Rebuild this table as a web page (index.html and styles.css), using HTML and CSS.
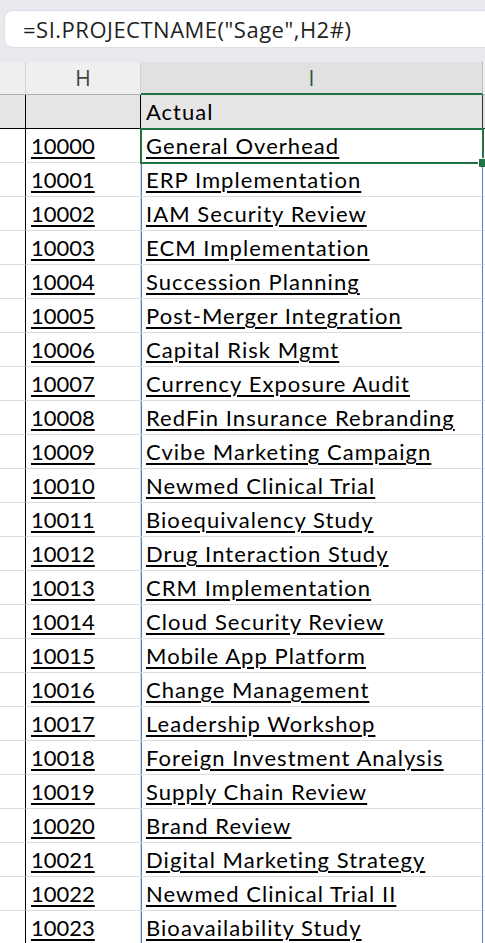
FILE: index.html
```html
<!DOCTYPE html>
<html>
<head>
<meta charset="utf-8">
<link rel="stylesheet" href="styles.css">
</head>
<body>
<div class="formula-area">
  <div class="formula-box"><span class="formula-text">=SI.PROJECTNAME("Sage",H2#)</span></div>
</div>
<div class="sheet">
  <div class="row head">
    <div class="c g"></div><div class="c h">H</div><div class="c i">I</div><div class="c j"></div>
  </div>
  <div class="row title">
    <div class="c g"></div><div class="c h"></div><div class="c i">Actual</div><div class="c j"></div>
  </div>
  <div class="row data first"><div class="c g"></div><div class="c h"><span class="link">10000</span></div><div class="c i active"><span class="link">General Overhead</span></div><div class="c j"></div></div>
  <div class="row data"><div class="c g"></div><div class="c h"><span class="link">10001</span></div><div class="c i"><span class="link">ERP Implementation</span></div><div class="c j"></div></div>
  <div class="row data"><div class="c g"></div><div class="c h"><span class="link">10002</span></div><div class="c i"><span class="link">IAM Security Review</span></div><div class="c j"></div></div>
  <div class="row data"><div class="c g"></div><div class="c h"><span class="link">10003</span></div><div class="c i"><span class="link">ECM Implementation</span></div><div class="c j"></div></div>
  <div class="row data"><div class="c g"></div><div class="c h"><span class="link">10004</span></div><div class="c i"><span class="link">Succession Planning</span></div><div class="c j"></div></div>
  <div class="row data"><div class="c g"></div><div class="c h"><span class="link">10005</span></div><div class="c i"><span class="link">Post-Merger Integration</span></div><div class="c j"></div></div>
  <div class="row data"><div class="c g"></div><div class="c h"><span class="link">10006</span></div><div class="c i"><span class="link">Capital Risk Mgmt</span></div><div class="c j"></div></div>
  <div class="row data"><div class="c g"></div><div class="c h"><span class="link">10007</span></div><div class="c i"><span class="link">Currency Exposure Audit</span></div><div class="c j"></div></div>
  <div class="row data"><div class="c g"></div><div class="c h"><span class="link">10008</span></div><div class="c i"><span class="link">RedFin Insurance Rebranding</span></div><div class="c j"></div></div>
  <div class="row data"><div class="c g"></div><div class="c h"><span class="link">10009</span></div><div class="c i"><span class="link">Cvibe Marketing Campaign</span></div><div class="c j"></div></div>
  <div class="row data"><div class="c g"></div><div class="c h"><span class="link">10010</span></div><div class="c i"><span class="link">Newmed Clinical Trial</span></div><div class="c j"></div></div>
  <div class="row data"><div class="c g"></div><div class="c h"><span class="link">10011</span></div><div class="c i"><span class="link">Bioequivalency Study</span></div><div class="c j"></div></div>
  <div class="row data"><div class="c g"></div><div class="c h"><span class="link">10012</span></div><div class="c i"><span class="link">Drug Interaction Study</span></div><div class="c j"></div></div>
  <div class="row data"><div class="c g"></div><div class="c h"><span class="link">10013</span></div><div class="c i"><span class="link">CRM Implementation</span></div><div class="c j"></div></div>
  <div class="row data"><div class="c g"></div><div class="c h"><span class="link">10014</span></div><div class="c i"><span class="link">Cloud Security Review</span></div><div class="c j"></div></div>
  <div class="row data"><div class="c g"></div><div class="c h"><span class="link">10015</span></div><div class="c i"><span class="link">Mobile App Platform</span></div><div class="c j"></div></div>
  <div class="row data"><div class="c g"></div><div class="c h"><span class="link">10016</span></div><div class="c i"><span class="link">Change Management</span></div><div class="c j"></div></div>
  <div class="row data"><div class="c g"></div><div class="c h"><span class="link">10017</span></div><div class="c i"><span class="link">Leadership Workshop</span></div><div class="c j"></div></div>
  <div class="row data"><div class="c g"></div><div class="c h"><span class="link">10018</span></div><div class="c i"><span class="link">Foreign Investment Analysis</span></div><div class="c j"></div></div>
  <div class="row data"><div class="c g"></div><div class="c h"><span class="link">10019</span></div><div class="c i"><span class="link">Supply Chain Review</span></div><div class="c j"></div></div>
  <div class="row data"><div class="c g"></div><div class="c h"><span class="link">10020</span></div><div class="c i"><span class="link">Brand Review</span></div><div class="c j"></div></div>
  <div class="row data"><div class="c g"></div><div class="c h"><span class="link">10021</span></div><div class="c i"><span class="link">Digital Marketing Strategy</span></div><div class="c j"></div></div>
  <div class="row data"><div class="c g"></div><div class="c h"><span class="link">10022</span></div><div class="c i"><span class="link">Newmed Clinical Trial II</span></div><div class="c j"></div></div>
  <div class="row data"><div class="c g"></div><div class="c h"><span class="link">10023</span></div><div class="c i"><span class="link">Bioavailability Study</span></div><div class="c j"></div></div>
</div>
</body>
</html>
```

FILE: styles.css
```css
* { box-sizing: border-box; }
html, body { margin: 0; padding: 0; }
body {
  background: #ffffff;
  width: 485px;
  height: 943px;
  overflow: hidden;
  font-family: "Lato", "Liberation Sans", sans-serif;
  font-variant-ligatures: none;
  color: #000;
}
.formula-area {
  background: #e8eaef;
  height: 62px;
  padding: 10px 0 0 4px;
}
.formula-box {
  height: 38px;
  background: #ffffff;
  border: 1px solid #dcdfe5;
  border-right: none;
  border-radius: 9px 0 0 9px;
  display: flex;
  align-items: center;
  padding-left: 18px;
}
.formula-text {
  font-family: "Open Sans", "Noto Sans", sans-serif;
  font-size: 22px;
  letter-spacing: 0.5px;
  color: #1f1f1f;
}
.sheet { display: flex; flex-direction: column; }
.row {
  display: grid;
  grid-template-columns: 26px 115px 342px 1fr;
}
.c { border-right: 1px solid #d6d6d6; border-bottom: 1px solid #dcdcdc; }
.c.j { border-right: none; }

/* column headers */
.head { height: 33px; }
.head .c {
  background: #efefef;
  border-bottom: 1px solid #ababab;
  border-right-color: #d2d2d2;
  display: flex;
  align-items: center;
  justify-content: center;
  font-family: "Open Sans", "Noto Sans", sans-serif;
  font-size: 21px;
  color: #444;
}
.head .c.i {
  background: #e1e1e1;
  border-bottom: 2px solid #217346;
  border-right-color: #bcbcbc;
  color: #1d5e3a;
}

/* title row */
.title { height: 34px; }
.title .c {
  background: #e6e6e6;
  border-bottom: 1px solid #000;
  border-right-color: #000;
  font-size: 22px;
  line-height: 26px;
  letter-spacing: 1px;
  display: flex;
  align-items: flex-end;
  padding: 0 0 3px 5px;
}
.title .c.i { border-right-color: #333; }
.title .c.j { border-right: none; }

/* data rows */
.data { height: 34px; }
.data .c {
  font-size: 22px;
  line-height: 26px;
  display: flex;
  align-items: flex-end;
  padding: 0 0 3px 5px;
  white-space: nowrap;
}
.data .c.g { border-right-color: #000; padding: 0; }
.data .c.h { border-right-color: #d6d6d6; }
.data .c.i {
  letter-spacing: 1.05px;
  border-right-color: #4a7fd4;
  box-shadow: inset 1px 0 0 #4a7fd4;
}
.link {
  text-decoration: underline;
  text-decoration-thickness: 2px;
  text-underline-offset: 3px;
}
.active { position: relative; }
.active::before {
  content: "";
  position: absolute;
  left: -1px;
  top: -1px;
  right: -2px;
  bottom: -2px;
  border: 2px solid #217346;
  pointer-events: none;
}
.active::after {
  content: "";
  position: absolute;
  right: -5px;
  bottom: -5px;
  width: 8px;
  height: 8px;
  background: #217346;
  border-left: 1px solid #fff;
  border-top: 1px solid #fff;
}
```
